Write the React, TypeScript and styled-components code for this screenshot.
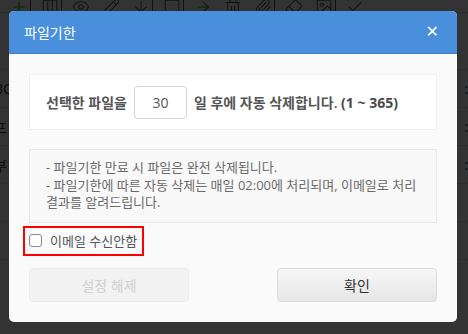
import * as React from 'react';
import styled, { createGlobalStyle } from 'styled-components';
import {
  Plus, Columns3, Eye, Pencil, ArrowDown, Square, ArrowRight, Trash2, Paperclip, Eraser, Image, Check,
} from 'lucide-react';

const GlobalStyle = createGlobalStyle`
  html, body { margin: 0; padding: 0; }
  body {
    width: 468px;
    height: 334px;
    overflow: hidden;
    font-family: "Open Sans", "Noto Sans CJK KR", sans-serif;
    background: #fff;
  }
`;

const Page = styled.div`
  position: relative;
  width: 468px;
  height: 334px;
  overflow: hidden;
  background: #fff;
`;

const Toolbar = styled.div`
  height: 12px;
  display: flex;
  align-items: flex-end;
  padding-left: 8px;
  border-bottom: 1px solid #ddd;
  overflow: hidden;
`;

const ToolButton = styled.div<{ $sep?: boolean }>`
  width: 22px;
  height: 26px;
  flex: none;
  display: flex;
  align-items: center;
  justify-content: center;
  margin-bottom: -8px;
  margin-right: 8px;
  border-right: ${(p) => (p.$sep ? '1px solid #555' : 'none')};
  color: #666;
`;

const Row = styled.div<{ $h?: number }>`
  height: ${(p) => p.$h || 37}px;
  display: flex;
  align-items: center;
  justify-content: space-between;
  margin: 0 -8px 0 -6px;
  border-bottom: 1px solid #e6e6e6;
  font-size: 14px;
  color: #444;
`;

const Overlay = styled.div`
  position: absolute;
  inset: 0;
  background: rgba(0, 0, 0, 0.8);
  display: flex;
  padding: 11px 11px 12px 9px;
`;

const Modal = styled.div`
  flex: 1;
  display: flex;
  flex-direction: column;
  background: #fafafa;
  border-radius: 5px;
  overflow: hidden;
`;

const Header = styled.div`
  height: 42px;
  flex: none;
  display: flex;
  align-items: center;
  justify-content: space-between;
  padding: 0 18px 0 15px;
  background: #4a8fdb;
  border-bottom: 1px solid #3f7dc4;
  color: #fff;
  font-size: 14px;
`;

const CloseX = styled.span`
  font-family: "DejaVu Sans", sans-serif;
  font-size: 16px;
  font-weight: 700;
  line-height: 1;
`;

const Body = styled.div`
  flex: 1;
  display: flex;
  flex-direction: column;
  padding: 20px 20px 19px;
`;

const Panel = styled.div<{ $muted?: boolean }>`
  background: ${(p) => (p.$muted ? '#f9f9f9' : '#fff')};
  border: 1px solid ${(p) => (p.$muted ? '#e8e8e8' : '#efefef')};
`;

const DaysPanel = styled(Panel)`
  height: 56px;
  box-sizing: border-box;
  display: flex;
  align-items: center;
  gap: 7px;
  padding: 0 16px;
  font-size: 14px;
  font-weight: 600;
  color: #555;
`;

const DayInput = styled.div`
  width: 53px;
  height: 33px;
  box-sizing: border-box;
  border: 1px solid #d4d4d4;
  border-radius: 4px;
  display: flex;
  align-items: center;
  justify-content: center;
  font-weight: 400;
  color: #555;
`;

const Range = styled.b`
  font-weight: 700;
  color: #4a4a4a;
`;

const NoticePanel = styled(Panel)`
  margin-top: 19px;
  padding: 9px 16px 10px;
  font-size: 13px;
  line-height: 17.5px;
  color: #6a6a6a;
`;

const OptOut = styled.label`
  align-self: flex-start;
  margin: 3px 0 0 -6px;
  height: 30px;
  box-sizing: border-box;
  border: 2px solid #f00;
  display: flex;
  align-items: center;
  gap: 8px;
  padding: 0 5px 0 4px;
  font-size: 13px;
  color: #555;
`;

const Box = styled.span`
  width: 13px;
  height: 13px;
  box-sizing: border-box;
  border: 1px solid #8a8a8a;
  border-radius: 3px;
  background: #fff;
`;

const Actions = styled.div`
  margin-top: 12px;
  display: flex;
  justify-content: space-between;
`;

const Button = styled.div<{ $disabled?: boolean }>`
  width: 160px;
  height: 34px;
  box-sizing: border-box;
  border-radius: 4px;
  display: flex;
  align-items: center;
  justify-content: center;
  font-size: 14px;
  border: 1px solid ${(p) => (p.$disabled ? '#ececec' : '#dcdcdc')};
  background: ${(p) => (p.$disabled ? '#f2f2f2' : 'linear-gradient(#f6f6f6, #e6e6e6)')};
  color: ${(p) => (p.$disabled ? '#d0d0d0' : '#333')};
`;

const tools = [
  { Icon: Plus, color: '#2e9e2e', sep: true },
  { Icon: Columns3, sep: true },
  { Icon: Eye },
  { Icon: Pencil },
  { Icon: ArrowDown, sep: true },
  { Icon: Square, sep: true },
  { Icon: ArrowRight, color: '#2e9e2e' },
  { Icon: Trash2 },
  { Icon: Paperclip, sep: true },
  { Icon: Eraser },
  { Icon: Image, sep: true },
  { Icon: Check },
];

const rows = ['BC', '프', '부', '', ''];

const App: React.FC = () => (
  <>
    <GlobalStyle />
    <Page>
      <Toolbar>
        {tools.map(({ Icon, color, sep }, i) => (
          <ToolButton $sep={sep} key={i}>
            <Icon color={color || '#666'} size={18} strokeWidth={1.5} />
          </ToolButton>
        ))}
      </Toolbar>
      <Row $h={56} />
      {rows.map((r, i) => (
        <Row key={i}>
          <span>{r}</span>
          <span>{r ? ':0' : ''}</span>
        </Row>
      ))}
      <Overlay>
        <Modal>
          <Header>
            <span>파일기한</span>
            <CloseX>✕</CloseX>
          </Header>
          <Body>
            <DaysPanel>
              <span>선택한 파일을</span>
              <DayInput>30</DayInput>
              <span>
                일 후에 자동 삭제합니다.
                {' '}
                <Range>(1 ~ 365)</Range>
              </span>
            </DaysPanel>
            <NoticePanel $muted>
              - 파일기한 만료 시 파일은 완전 삭제됩니다.
              <br />
              - 파일기한에 따른 자동 삭제는 매일 02:00에 처리되며, 이메일로 처리 결과를 알려드립니다.
            </NoticePanel>
            <OptOut>
              <Box />
              이메일 수신안함
            </OptOut>
            <Actions>
              <Button $disabled>설정 해제</Button>
              <Button>확인</Button>
            </Actions>
          </Body>
        </Modal>
      </Overlay>
    </Page>
  </>
);

export default App;
